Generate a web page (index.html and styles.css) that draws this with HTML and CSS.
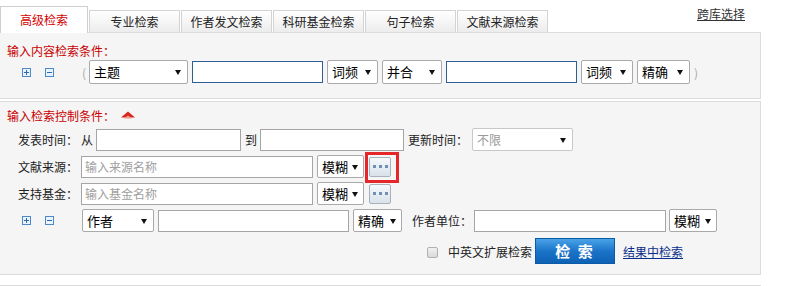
FILE: index.html
```html
<!DOCTYPE html>
<html lang="zh">
<head>
<meta charset="utf-8">
<link rel="stylesheet" href="styles.css">
</head>
<body>
<div class="page">
  <div class="tabs">
    <div class="tab active">高级检索</div>
    <div class="tab">专业检索</div>
    <div class="tab">作者发文检索</div>
    <div class="tab">科研基金检索</div>
    <div class="tab">句子检索</div>
    <div class="tab">文献来源检索</div>
    <a class="cross" href="#">跨库选择</a>
  </div>

  <div class="sec sec1">
    <div class="title">输入内容检索条件：</div>
    <div class="row row-c">
      <svg class="pm" width="9" height="9" viewBox="0 0 9 9"><rect x="0.5" y="0.5" width="8" height="8" fill="#e9f3fc" stroke="#4f88c6"/><path d="M2 4.5h5M4.5 2v5" stroke="#2c6bb0" stroke-width="1"/></svg>
      <svg class="pm pm2" width="9" height="9" viewBox="0 0 9 9"><rect x="0.5" y="0.5" width="8" height="8" fill="#e9f3fc" stroke="#4f88c6"/><path d="M2 4.5h5" stroke="#2c6bb0" stroke-width="1"/></svg>
      <span class="paren">(</span>
      <span class="sel s-theme">主题</span>
      <span class="inp inp-blue w131"></span>
      <span class="sel s51">词频</span>
      <span class="sel s60">并合</span>
      <span class="inp inp-blue w131"></span>
      <span class="sel s52">词频</span>
      <span class="sel s53">精确</span>
      <span class="paren paren-r">)</span>
    </div>
  </div>

  <div class="sec sec2">
    <div class="title">输入检索控制条件：<svg class="up" width="14" height="8" viewBox="0 0 14 8"><path d="M0 6.5 L7 0.5 L14 6.5 Z" fill="#d9261c"/><path d="M3 7.5 L7 4.5 L11 7.5 Z" fill="#f29a94"/></svg></div>

    <div class="row">
      <span class="lbl">发表时间：</span>
      <span class="word">从</span>
      <span class="inp w145"></span>
      <span class="word word2">到</span>
      <span class="inp w144"></span>
      <span class="lbl lbl-upd">更新时间：</span>
      <span class="sel s-limit">不限</span>
    </div>

    <div class="row">
      <span class="lbl">文献来源：</span>
      <span class="inp w232 ph">输入来源名称</span>
      <span class="sel s47">模糊</span>
      <span class="dots-wrap"><span class="dots"><i></i><i></i><i></i></span><span class="mark"></span></span>
    </div>

    <div class="row">
      <span class="lbl">支持基金：</span>
      <span class="inp w232 ph">输入基金名称</span>
      <span class="sel s47">模糊</span>
      <span class="dots-wrap"><span class="dots"><i></i><i></i><i></i></span></span>
    </div>

    <div class="row row-c">
      <svg class="pm" width="9" height="9" viewBox="0 0 9 9"><rect x="0.5" y="0.5" width="8" height="8" fill="#e9f3fc" stroke="#4f88c6"/><path d="M2 4.5h5M4.5 2v5" stroke="#2c6bb0" stroke-width="1"/></svg>
      <svg class="pm pm2" width="9" height="9" viewBox="0 0 9 9"><rect x="0.5" y="0.5" width="8" height="8" fill="#e9f3fc" stroke="#4f88c6"/><path d="M2 4.5h5" stroke="#2c6bb0" stroke-width="1"/></svg>
      <span class="sel s-author">作者</span>
      <span class="inp w191"></span>
      <span class="sel s49">精确</span>
      <span class="lbl lbl-org">作者单位：</span>
      <span class="inp w192"></span>
      <span class="sel s48">模糊</span>
    </div>

    <div class="row row-btn">
      <span class="chk"></span>
      <span class="chk-text">中英文扩展检索</span>
      <span class="btn">检 索</span>
      <a class="inres" href="#">结果中检索</a>
    </div>
  </div>
  <div class="next"></div>
</div>
</body>
</html>
```

FILE: styles.css
```css
* { box-sizing: border-box; }
body {
  margin: 0;
  background: #fff;
  font-family: "Noto Sans CJK SC", "Microsoft YaHei", sans-serif;
  font-size: 12px;
  color: #333;
}
.page { width: 799px; }

.tabs {
  display: flex;
  align-items: flex-end;
  height: 32px;
}
.tab {
  width: 91px;
  height: 22px;
  margin-left: 1px;
  border: 1px solid #d4d4d4;
  border-bottom: none;
  background: linear-gradient(#ffffff, #ececec);
  text-align: center;
  line-height: 21px;
  color: #222;
  white-space: nowrap;
}
.tab.active {
  width: 88px;
  height: 27px;
  margin-left: 0;
  margin-bottom: -1px;
  background: #fff;
  color: #d40000;
  line-height: 26px;
  border-color: #cfcfcf;
  z-index: 1;
}
.cross {
  align-self: flex-start;
  margin-top: 6px;
  margin-left: 149px;
  color: #333;
  text-decoration: underline;
  line-height: 16px;
}

.sec {
  width: 761px;
  background: #f5f5f5;
  border: 1px solid #dcdcdc;
  border-left: none;
}
.sec1 {
  padding: 10px 0 14px 0;
}
.sec2 {
  margin-top: 2px;
  padding: 6px 0 10px 0;
}
.title {
  color: #c80000;
  line-height: 16px;
  padding-left: 7px;
  display: flex;
  align-items: center;
}
.up { margin-left: 6px; margin-top: -2px; }

.row {
  display: flex;
  align-items: center;
  height: 23px;
  margin-top: 4px;
}
.sec1 .row { margin-top: 1px; height: 24px; }
.row-c { padding-left: 22px; }
.pm { flex: none; }
.pm2 { margin-left: 14px; }
.paren {
  width: 7px;
  margin-left: 28px;
  color: #aaa;
  font-size: 12px;
}
.paren-r { margin-left: 4px; }

.sel {
  position: relative;
  height: 24px;
  line-height: 22px;
  padding-left: 4px;
  border: 1px solid #aaa;
  border-radius: 2px;
  background: #fff;
  color: #000;
  font-size: 13px;
  margin-right: 4px;
  flex: none;
}
.sel::after {
  content: "";
  position: absolute;
  right: 6px;
  top: 9px;
  border-left: 3px solid transparent;
  border-right: 3px solid transparent;
  border-top: 5px solid #111;
}
.s-theme { width: 99px; margin-right: 4px; }
.s51 { width: 51px; }
.s60 { width: 60px; }
.s52 { width: 52px; }
.s53 { width: 53px; margin-right: 0; }
.sec2 .sel { height: 23px; line-height: 21px; }
.s-limit { width: 101px; color: #999; border-color: #c8c8c8; font-size: 12px; }
.s47 { width: 47px; margin-right: 5px; }
.s47::after, .s49::after, .s48::after { right: 5px; }
.s-author { width: 72px; margin-left: 28px; }
.s49 { width: 49px; }
.s48 { width: 48px; margin-left: 3px; }

.inp {
  height: 22px;
  border: 1px solid #a5a5a5;
  background: #fff;
  margin-right: 4px;
  flex: none;
  line-height: 20px;
  padding-left: 3px;
}
.inp-blue { border-color: #2e5e94; }
.w131 { width: 131px; }
.w145 { width: 145px; margin-right: 0; }
.w144 { width: 144px; margin-right: 0; }
.w232 { width: 232px; }
.w191 { width: 191px; }
.w192 { width: 192px; margin-right: 0; }
.ph { color: #a0a0a0; font-size: 12px; }

.lbl {
  width: 63px;
  margin-left: 18px;
  color: #222;
  flex: none;
}
.row-c .lbl-org { margin-left: 6px; width: 62px; }
.lbl-upd { margin-left: 4px; width: 64px; }
.word { width: 15px; color: #222; flex: none; }
.word2 { margin-left: 4px; }

.dots-wrap {
  position: relative;
  width: 22px;
  height: 20px;
  flex: none;
}
.dots {
  display: flex;
  align-items: center;
  justify-content: center;
  gap: 3px;
  width: 22px;
  height: 20px;
  border: 1px solid #a9b2bc;
  border-radius: 2px;
  background: linear-gradient(#f6f9fc, #d9e1ea);
}
.dots i {
  width: 3px;
  height: 3px;
  background: #6f8fb3;
}
.mark {
  position: absolute;
  left: -4px;
  top: -5px;
  width: 34px;
  height: 31px;
  border: 3px solid #e5262a;
}

.row-btn {
  height: 26px;
  margin-top: 6px;
  padding-left: 427px;
}
.chk {
  width: 11px;
  height: 11px;
  border: 1px solid #b0b0b0;
  border-radius: 2px;
  background: linear-gradient(#f2f2f2, #d8d8d8);
  margin-top: 3px;
  flex: none;
}
.chk-text {
  margin-left: 10px;
  width: 87px;
  color: #222;
  flex: none;
}
.btn {
  width: 80px;
  height: 26px;
  line-height: 24px;
  text-align: center;
  color: #fff;
  font-size: 15px;
  font-weight: bold;
  letter-spacing: 2px;
  border: 1px solid #0b5aa6;
  background: linear-gradient(#4aa3e8, #1b74c8 50%, #0d62b5);
  flex: none;
}
.inres {
  margin-left: 8px;
  color: #0b2f8a;
  text-decoration: underline;
}
.next {
  width: 761px;
  margin-top: 10px;
  border-top: 1px solid #dcdcdc;
  height: 1px;
}
```
